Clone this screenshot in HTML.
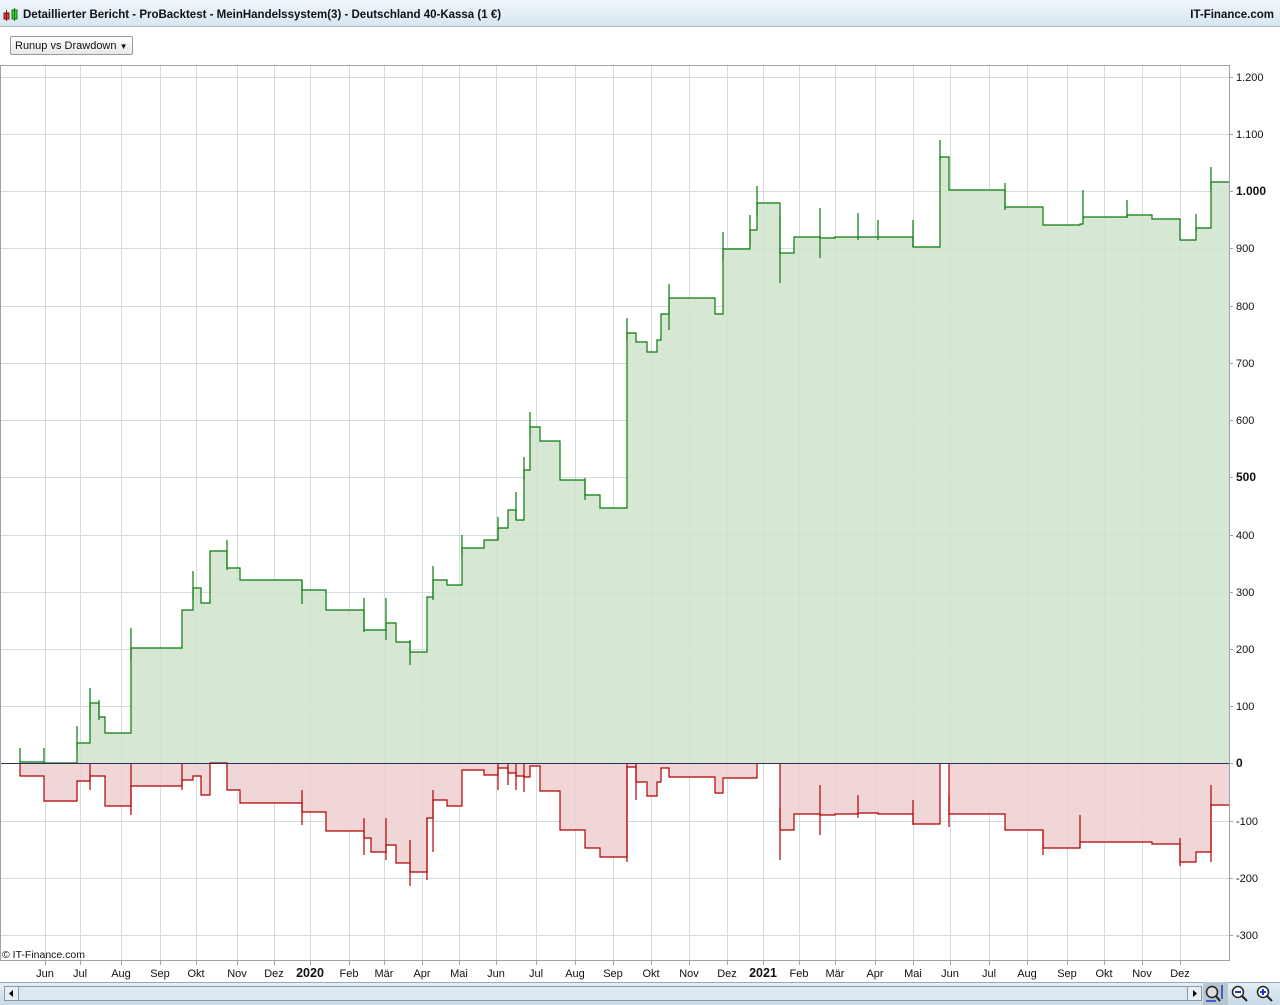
<!DOCTYPE html>
<html><head><meta charset="utf-8"><style>
*{margin:0;padding:0;box-sizing:border-box}
body{width:1280px;height:1005px;overflow:hidden;background:#fff;font-family:"Liberation Sans",Arial,sans-serif;position:relative}
.title{position:absolute;left:0;top:0;width:1280px;height:27px;background:linear-gradient(#f2f8fc,#d6e6f1);border-bottom:1px solid #a8b8c4;font-size:11.5px;font-weight:bold;color:#111}
.title .t{position:absolute;left:23px;top:9px}
.title .r{position:absolute;right:6px;top:9px}
.dd{position:absolute;left:10px;top:36px;width:123px;height:19px;border:1px solid #999;border-radius:2px;background:linear-gradient(#fff,#e8e8e8);font-size:11px;padding:3px 0 0 4px;color:#111}
.sb{position:absolute;left:0;top:982px;width:1280px;height:23px;background:linear-gradient(#e4eef5,#c9dae6);border-top:1px solid #9ab}
</style></head><body>
<div class="title"><svg style="position:absolute;left:3px;top:8px" width="18" height="14"><rect x="1" y="5" width="5" height="6" fill="#e04040" stroke="#801010"/><line x1="3.5" y1="2" x2="3.5" y2="13" stroke="#801010"/><rect x="9" y="2" width="5" height="9" fill="#40d040" stroke="#107010"/><line x1="11.5" y1="0" x2="11.5" y2="13" stroke="#107010"/></svg><span class="t">Detaillierter Bericht - ProBacktest - MeinHandelssystem(3) - Deutschland 40-Kassa (1 €)</span><span class="r">IT-Finance.com</span></div>
<div class="dd">Runup vs Drawdown <span style="font-size:8px">▼</span></div>
<svg style="position:absolute;left:0;top:0" width="1280" height="1005">
<g stroke="#d3dbdf" stroke-width="1">
<path d="M45.5 66V960M80.5 66V960M121.5 66V960M160.5 66V960M196.5 66V960M237.5 66V960M274.5 66V960M310.5 66V960M349.5 66V960M384.5 66V960M422.5 66V960M459.5 66V960M496.5 66V960M536.5 66V960M575.5 66V960M613.5 66V960M651.5 66V960M689.5 66V960M727.5 66V960M763.5 66V960M799.5 66V960M835.5 66V960M875.5 66V960M913.5 66V960M950.5 66V960M989.5 66V960M1027.5 66V960M1067.5 66V960M1104.5 66V960M1142.5 66V960M1180.5 66V960"/>
<path d="M0 77.5H1229M0 134.5H1229M0 191.5H1229M0 248.5H1229M0 306.5H1229M0 363.5H1229M0 420.5H1229M0 477.5H1229M0 535.5H1229M0 592.5H1229M0 649.5H1229M0 706.5H1229M0 821.5H1229M0 878.5H1229M0 935.5H1229"/>
</g>
<path fill="#cfe4cc" fill-opacity="0.85" d="M20 763V762H44V763H77V743H90V703H99V717H105V733H131V648H182V610H193V588H201V603H210V551H227V568H240V580H302V590H326V610H364V630H371V630H386V623H396V642H410V652H427V597H433V580H447V585H462V548H484V540H498V528H508V510H516V520H524V470H530V427H540V441H560V480H585V495H600V508H627V333H636V342H647V352H657V340H661V314H669V298H715V314H723V249H750V230H757V203H780V253H794V237H820V238H835V237H858V237H878V237H913V247H940V157H949V190H1005V207H1043V225H1080V224H1083V217H1127V215H1152V219H1180V240H1196V228H1211V182H1229V763Z"/>
<path fill="none" stroke="#0a7a0a" stroke-width="1.2" d="M20 763V762H44V763H77V743H90V703H99V717H105V733H131V648H182V610H193V588H201V603H210V551H227V568H240V580H302V590H326V610H364V630H371V630H386V623H396V642H410V652H427V597H433V580H447V585H462V548H484V540H498V528H508V510H516V520H524V470H530V427H540V441H560V480H585V495H600V508H627V333H636V342H647V352H657V340H661V314H669V298H715V314H723V249H750V230H757V203H780V253H794V237H820V238H835V237H858V237H878V237H913V247H940V157H949V190H1005V207H1043V225H1080V224H1083V217H1127V215H1152V219H1180V240H1196V228H1211V182H1229"/>
<path fill="#efcfd1" fill-opacity="0.85" d="M20 763V776H44V801H77V781H90V776H105V806H131V786H182V780H193V776H201V795H210V763H227V790H240V803H302V812H326V831H364V838H371V852H386V845H396V863H410V872H427V818H433V800H447V806H462V770H484V775H498V768H508V773H516V776H524V777H530V766H540V791H560V830H585V848H600V857H627V767H636V782H647V796H657V782H661V768H669V777H715V793H723V778H750V778H757V763H780V830H794V814H820V815H835V814H858V813H878V814H913V824H940V763H949V814H1005V830H1043V848H1080V842H1127V842H1152V844H1180V862H1196V852H1211V805H1229V763Z"/>
<path fill="none" stroke="#b00000" stroke-width="1.2" d="M20 763V776H44V801H77V781H90V776H105V806H131V786H182V780H193V776H201V795H210V763H227V790H240V803H302V812H326V831H364V838H371V852H386V845H396V863H410V872H427V818H433V800H447V806H462V770H484V775H498V768H508V773H516V776H524V777H530V766H540V791H560V830H585V848H600V857H627V767H636V782H647V796H657V782H661V768H669V777H715V793H723V778H750V778H757V763M780 763V830H794V814H820V815H835V814H858V813H878V814H913V824H940V763M949 763V814H1005V830H1043V848H1080V842H1127V842H1152V844H1180V862H1196V852H1211V805H1229"/>
<g stroke="#0a7a0a" stroke-width="1.2"><path d="M20 748V763M44 748V763M77 726V750M90 688V720M99 700V720M131 628V660M193 571V600M227 540V570M302 580V604M364 598V632M386 598V640M410 640V665M433 566V600M462 535V555M498 517V540M516 492V520M524 457V480M530 412V435M585 478V500M627 318V340M669 284V330M723 232V260M750 215V245M757 186V215M780 215V283M820 208V258M858 213V240M878 220V240M913 220V247M940 140V160M1005 183V210M1083 190V220M1127 200V218M1196 214V232M1211 167V190"/></g>
<g stroke="#b00000" stroke-width="1.2"><path d="M90 763V790M131 763V815M182 763V790M302 790V825M364 818V855M386 818V860M410 840V886M427 818V880M433 790V852M498 763V790M508 763V785M516 763V790M524 763V792M627 763V862M636 763V800M780 808V860M820 785V835M858 795V818M913 800V825M949 795V827M1043 830V855M1080 815V848M1180 838V866M1211 785V862"/></g>
<line x1="0" y1="763.5" x2="1229" y2="763.5" stroke="#303060" stroke-width="1"/>
<rect x="0.5" y="65.5" width="1229" height="895" fill="none" stroke="#9aa4aa"/>
<g stroke="#9aa4aa"><path d="M1229 77.5h4M1229 134.5h4M1229 191.5h4M1229 248.5h4M1229 306.5h4M1229 363.5h4M1229 420.5h4M1229 477.5h4M1229 535.5h4M1229 592.5h4M1229 649.5h4M1229 706.5h4M1229 763.5h4M1229 821.5h4M1229 878.5h4M1229 935.5h4"/>
<path d="M45.5 960v5M80.5 960v5M121.5 960v5M160.5 960v5M196.5 960v5M237.5 960v5M274.5 960v5M310.5 960v5M349.5 960v5M384.5 960v5M422.5 960v5M459.5 960v5M496.5 960v5M536.5 960v5M575.5 960v5M613.5 960v5M651.5 960v5M689.5 960v5M727.5 960v5M763.5 960v5M799.5 960v5M835.5 960v5M875.5 960v5M913.5 960v5M950.5 960v5M989.5 960v5M1027.5 960v5M1067.5 960v5M1104.5 960v5M1142.5 960v5M1180.5 960v5"/></g>
<g font-family="Liberation Sans, Arial, sans-serif" font-size="11" fill="#111">
<text x="1236" y="81">1.200</text><text x="1236" y="138">1.100</text><text x="1236" y="195" font-weight="bold" font-size="12">1.000</text><text x="1236" y="252">900</text><text x="1236" y="310">800</text><text x="1236" y="367">700</text><text x="1236" y="424">600</text><text x="1236" y="481" font-weight="bold" font-size="12">500</text><text x="1236" y="539">400</text><text x="1236" y="596">300</text><text x="1236" y="653">200</text><text x="1236" y="710">100</text><text x="1236" y="767" font-weight="bold" font-size="12">0</text><text x="1236" y="825">-100</text><text x="1236" y="882">-200</text><text x="1236" y="939">-300</text>
<text x="2" y="958" font-size="10.5">© IT-Finance.com</text>
<g text-anchor="middle">
<text x="45" y="977">Jun</text><text x="80" y="977">Jul</text><text x="121" y="977">Aug</text><text x="160" y="977">Sep</text><text x="196" y="977">Okt</text><text x="237" y="977">Nov</text><text x="274" y="977">Dez</text><text x="310" y="977" font-weight="bold" font-size="12.5">2020</text><text x="349" y="977">Feb</text><text x="384" y="977">Mär</text><text x="422" y="977">Apr</text><text x="459" y="977">Mai</text><text x="496" y="977">Jun</text><text x="536" y="977">Jul</text><text x="575" y="977">Aug</text><text x="613" y="977">Sep</text><text x="651" y="977">Okt</text><text x="689" y="977">Nov</text><text x="727" y="977">Dez</text><text x="763" y="977" font-weight="bold" font-size="12.5">2021</text><text x="799" y="977">Feb</text><text x="835" y="977">Mär</text><text x="875" y="977">Apr</text><text x="913" y="977">Mai</text><text x="950" y="977">Jun</text><text x="989" y="977">Jul</text><text x="1027" y="977">Aug</text><text x="1067" y="977">Sep</text><text x="1104" y="977">Okt</text><text x="1142" y="977">Nov</text><text x="1180" y="977">Dez</text>
</g></g>
</svg>
<div class="sb"></div>
<svg style="position:absolute;left:0;top:982px" width="1280" height="23">
<rect x="4.5" y="4.5" width="1197" height="14" fill="#dce8f0" stroke="#8a9aa6"/>
<rect x="4.5" y="4.5" width="14" height="14" fill="#e8eef2" stroke="#8a9aa6"/><path d="M13 8v7l-4-3.5z" fill="#000"/>
<rect x="1187.5" y="4.5" width="14" height="14" fill="#e8eef2" stroke="#8a9aa6"/><path d="M1193 8v7l4-3.5z" fill="#000"/>
<rect x="1203" y="0" width="25" height="23" fill="#b8c6d0"/>
<circle cx="1212" cy="10" r="5.5" fill="#ddd" stroke="#222" stroke-width="1.5"/><path d="M1216 14l4 5" stroke="#222" stroke-width="2"/><path d="M1222 3v14M1206 19h10" stroke="#1a3ad0" stroke-width="1.5"/>
<circle cx="1238" cy="10" r="5.5" fill="#fff" stroke="#222" stroke-width="1.5"/><path d="M1242 14l5 5" stroke="#222" stroke-width="2"/><path d="M1235 10h6" stroke="#1a3ad0" stroke-width="2"/>
<circle cx="1263" cy="10" r="5.5" fill="#fff" stroke="#222" stroke-width="1.5"/><path d="M1267 14l5 5" stroke="#222" stroke-width="2"/><path d="M1260 10h6M1263 7v6" stroke="#1a3ad0" stroke-width="2"/>
</svg>
</body></html>
